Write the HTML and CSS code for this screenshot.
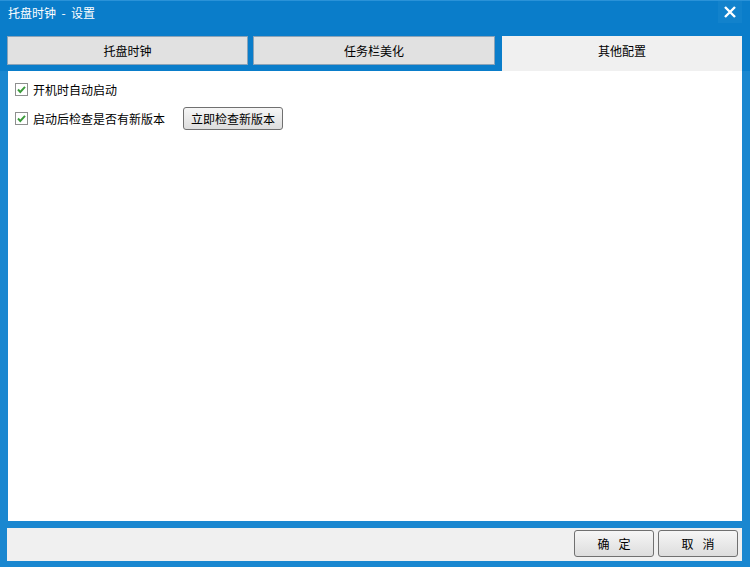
FILE: index.html
```html
<!DOCTYPE html>
<html>
<head>
    <meta charset="utf-8">
    <link rel="stylesheet" href="styles.css">
</head>
<body>
    <div class="window">
        <!-- title bar -->
        <div class="titlebar">
            <span class="title">托盘时钟&nbsp; -&nbsp; 设置</span>
            <div class="close-btn">
                <svg width="14" height="12" viewBox="0 0 14 12"><path d="M2 1 L12 11 M12 1 L2 11" stroke="#fff" stroke-width="2.4" fill="none"/></svg>
            </div>
        </div>

        <!-- tabs -->
        <div class="tabs">
            <div class="tab tab-1">托盘时钟</div>
            <div class="tab tab-2">任务栏美化</div>
            <div class="tab tab-3 active">其他配置</div>
        </div>

        <!-- content -->
        <div class="content">
            <div class="row">
                <span class="checkbox">
                    <svg width="13" height="13" viewBox="0 0 13 13"><rect x="0.5" y="0.5" width="12" height="12" fill="#fff" stroke="#8e8f8f"/><path d="M3 6.5 L5.3 9 L10 3.8" stroke="#3b9b3b" stroke-width="1.9" fill="none"/></svg>
                </span>
                <span class="label">开机时自动启动</span>
            </div>
            <div class="row row-2">
                <span class="checkbox">
                    <svg width="13" height="13" viewBox="0 0 13 13"><rect x="0.5" y="0.5" width="12" height="12" fill="#fff" stroke="#8e8f8f"/><path d="M3 6.5 L5.3 9 L10 3.8" stroke="#3b9b3b" stroke-width="1.9" fill="none"/></svg>
                </span>
                <span class="label">启动后检查是否有新版本</span>
                <button class="btn check-btn">立即检查新版本</button>
            </div>
        </div>

        <!-- footer -->
        <div class="footer">
            <button class="btn footer-btn">确<span class="wide-gap"></span>定</button>
            <button class="btn footer-btn">取<span class="wide-gap"></span>消</button>
        </div>
    </div>
</body>
</html>
```

FILE: styles.css
```css
body {
    margin: 0;
    font-family: "Noto Sans CJK SC", "DejaVu Sans", sans-serif;
    font-size: 12px;
    color: #000;
}

.window {
    width: 750px;
    height: 567px;
    background-color: #1a87d0;
    display: flex;
    flex-direction: column;
    overflow: hidden;
}

.titlebar {
    height: 35px;
    background-color: #0a7dca;
    display: flex;
    justify-content: space-between;
    align-items: flex-start;
    border-top: 1px solid #2a92d8;
    box-sizing: border-box;
}

.title {
    color: #fff;
    margin: 3px 0 0 8px;
    line-height: 18px;
    font-size: 12px;
}

.close-btn {
    width: 24px;
    height: 22px;
    margin-right: 8px;
    display: flex;
    align-items: center;
    justify-content: center;
    background-color: #1282cc;
}

.tabs {
    height: 36px;
    display: flex;
    align-items: flex-start;
    background-color: #0a7dca;
    padding-left: 7px;
}

.tab {
    height: 29px;
    box-sizing: border-box;
    border: 1px solid #8aa3b8;
    background-color: #e1e1e1;
    display: flex;
    align-items: center;
    justify-content: center;
    margin-top: 1px;
}

.tab-1 {
    width: 241px;
    margin-right: 5px;
}

.tab-2 {
    width: 242px;
    margin-right: 7px;
}

.tab.active {
    width: 240px;
    height: 35px;
    border: none;
    background-color: #f0f0f0;
    padding-bottom: 6px;
}

.content {
    height: 450px;
    margin: 0 8px 0 8px;
    background-color: #fff;
    padding: 9px 0 0 7px;
    box-sizing: border-box;
}

.row {
    display: flex;
    align-items: center;
    height: 18px;
}

.row-2 {
    margin-top: 11px;
}

.checkbox {
    width: 13px;
    height: 13px;
    display: flex;
}

.label {
    margin-left: 5px;
}

.btn {
    font-family: "Noto Sans CJK SC", "DejaVu Sans", sans-serif;
    font-size: 12px;
    color: #000;
    background: linear-gradient(#f6f6f6, #dddddd);
    border: 1px solid #707070;
    border-radius: 3px;
    padding: 0;
    box-sizing: border-box;
}

.check-btn {
    width: 100px;
    height: 23px;
    margin-left: 18px;
}

.wide-gap {
    display: inline-block;
    width: 9px;
}

.footer {
    height: 33px;
    margin: 7px 8px 0 7px;
    background-color: #f0f0f0;
    display: flex;
    justify-content: flex-end;
    align-items: flex-start;
    padding-top: 2px;
    box-sizing: border-box;
}

.footer-btn {
    width: 80px;
    height: 27px;
    margin-right: 4px;
}
```
